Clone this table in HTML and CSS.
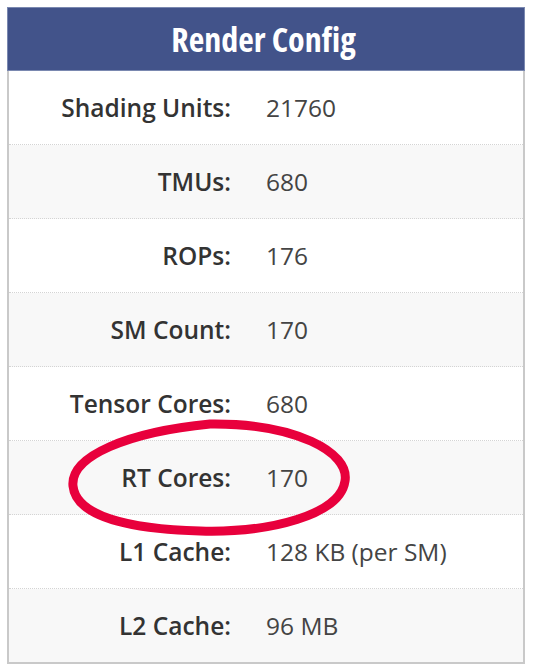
FILE: index.html
```html
<!DOCTYPE html>
<html>
<head>
<meta charset="utf-8">
<link rel="stylesheet" href="styles.css">
</head>
<body>
<div class="card">
  <div class="card-head">Render Config</div>
  <div class="row"><div class="label">Shading Units:</div><div class="value">21760</div></div>
  <div class="row"><div class="label">TMUs:</div><div class="value">680</div></div>
  <div class="row"><div class="label">ROPs:</div><div class="value">176</div></div>
  <div class="row"><div class="label">SM Count:</div><div class="value">170</div></div>
  <div class="row"><div class="label">Tensor Cores:</div><div class="value">680</div></div>
  <div class="row"><div class="label">RT Cores:</div><div class="value">170</div></div>
  <div class="row"><div class="label">L1 Cache:</div><div class="value">128 KB (per SM)</div></div>
  <div class="row"><div class="label">L2 Cache:</div><div class="value">96 MB</div></div>
  <svg class="circle" width="533" height="672" viewBox="0 0 533 672">
    <path d="M 210 424 C 295 423, 350 452, 345 481 C 340 515, 270 533, 200 531 C 128 529, 76 516, 73 486 C 70 456, 128 432, 210 424 Z" fill="none" stroke="#e8003c" stroke-width="9"/>
  </svg>
</div>
</body>
</html>
```
FILE: styles.css
```css
html, body {
  margin: 0;
  padding: 0;
  background: #ffffff;
}
body {
  padding: 7px 7px 0 7px;
  font-family: "Open Sans", "Liberation Sans", sans-serif;
}
.card {
  width: 514px;
  border: 2px solid #c9c9c9;
  border-top: 0;
  background: #ffffff;
}
.card-head {
  height: 62px;
  margin: 0 -2px;
  background: #42538a;
  border: 1px solid #7a88b0;
  color: #ffffff;
  font-weight: 700;
  font-stretch: 75%;
  font-size: 34px;
  display: flex;
  align-items: center;
  justify-content: center;
  padding-right: 5px;
}
.row {
  height: 73px;
  display: flex;
  align-items: center;
  border-bottom: 1px dotted #d4d4d4;
  font-size: 24.5px;
}
.row:nth-child(odd) {
  background: #f8f8f8;
}
.row:last-of-type {
  border-bottom: 0;
}
.label {
  width: 222px;
  text-align: right;
  font-weight: 600;
  color: #333333;
}
.value {
  padding-left: 35px;
  color: #444444;
}
.circle {
  position: absolute;
  left: 0;
  top: 0;
  pointer-events: none;
}
```
